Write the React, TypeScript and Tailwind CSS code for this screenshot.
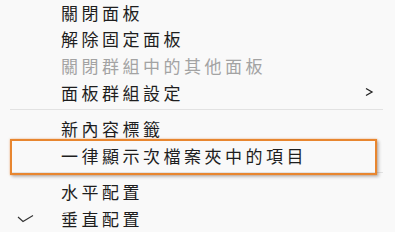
import React from "react";

type Item = { label: string; disabled?: boolean; check?: boolean; sub?: boolean };

const groups: Item[][] = [
  [
    { label: "關閉面板" },
    { label: "解除固定面板" },
    { label: "關閉群組中的其他面板", disabled: true },
    { label: "面板群組設定", sub: true },
  ],
  [{ label: "新內容標籤" }, { label: "一律顯示次檔案夾中的項目" }],
  [{ label: "水平配置" }, { label: "垂直配置", check: true }],
];

function Row({ item, first }: { item: Item; first?: boolean }) {
  return (
    <div className={"relative flex items-center pl-[61px] " + (first ? "h-[25px]" : "h-[27px]")}>
      {item.check && (
        <svg className="absolute left-[17px] top-[9px]" width="18" height="10" viewBox="0 0 18 10">
          <polyline points="1,3 6,7.5 16,1.5" fill="none" stroke="#333" strokeWidth="1.1" />
        </svg>
      )}
      <span
        className={
          "block text-[17px] leading-[18px] tracking-[3.5px] whitespace-nowrap " +
          (item.disabled ? "text-[#a3a3a3]" : "text-[#1e1e1e]")
        }
      >
        {item.label}
      </span>
      {item.sub && (
        <svg className="absolute left-[364px] top-[8px]" width="10" height="10" viewBox="0 0 10 10">
          <polyline points="2,1.5 8,5 2,8.5" fill="none" stroke="#222" strokeWidth="1.3" />
        </svg>
      )}
    </div>
  );
}

export default function App() {
  return (
    <div
      className="relative h-[232px] w-[395px] overflow-hidden bg-[#f9f9f9]"
      style={{ fontFamily: '"Noto Sans CJK TC", "Noto Sans CJK SC", sans-serif' }}
    >
      <div className="flex flex-col">
        {groups.map((g, gi) => (
          <React.Fragment key={gi}>
            {gi > 0 && (
              <div className="pb-[5px] pt-[3px] pl-[10px] pr-[12px]">
                <div className="h-px bg-[#e2e2e2]" />
              </div>
            )}
            {g.map((it, ii) => (
              <Row key={it.label} item={it} first={gi === 0 && ii === 0} />
            ))}
          </React.Fragment>
        ))}
      </div>
      <div className="absolute left-[10px] top-[139px] h-[36px] w-[367px] border-2 border-[#e8862f] shadow-[2px_2px_3px_rgba(0,0,0,0.22),0_0_2px_rgba(232,134,47,0.6)]" />
    </div>
  );
}
